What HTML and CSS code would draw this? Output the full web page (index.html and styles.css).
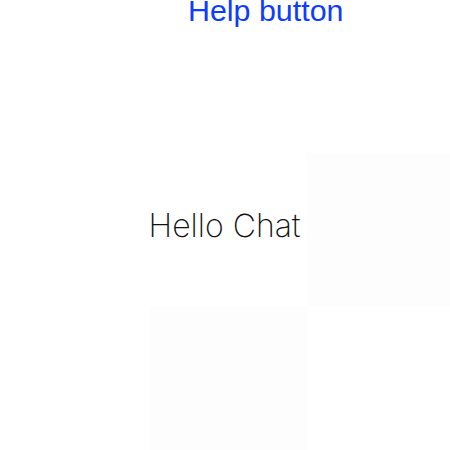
FILE: index.html
```html
<!DOCTYPE html>
<html>
<head>
<meta charset="utf-8">
<link rel="stylesheet" href="styles.css">
</head>
<body>
<div class="page">
  <a class="help">Help button</a>
  <div class="grid">
    <div class="cell"></div>
    <div class="cell"></div>
    <div class="cell"></div>
    <div class="cell"></div>
    <div class="cell center"><span class="hello">Hello Chat</span></div>
    <div class="cell tile"></div>
    <div class="cell"></div>
    <div class="cell tile"></div>
    <div class="cell"></div>
  </div>
</div>
</body>
</html>
```
FILE: styles.css
```css
html, body {
  margin: 0;
  padding: 0;
  background: #ffffff;
}
.page {
  position: relative;
  width: 450px;
  height: 450px;
  overflow: hidden;
}
.help {
  position: absolute;
  left: 188px;
  top: -7px;
  font-family: "Liberation Sans", Arial, sans-serif;
  font-size: 30.4px;
  line-height: 34px;
  color: #0d3bff;
  white-space: nowrap;
}
.grid {
  display: grid;
  grid-template-columns: 150px 157px 143px;
  grid-template-rows: 153px 154px 143px;
  width: 450px;
  height: 450px;
}
.tile {
  background: #fdfdfd;
}
.center {
  display: flex;
  align-items: center;
  justify-content: center;
}
.hello {
  font-family: "Inter", sans-serif;
  font-weight: 150;
  font-size: 32px;
  color: #111;
  white-space: nowrap;
  transform: translate(-4px, -5px);
}
```
